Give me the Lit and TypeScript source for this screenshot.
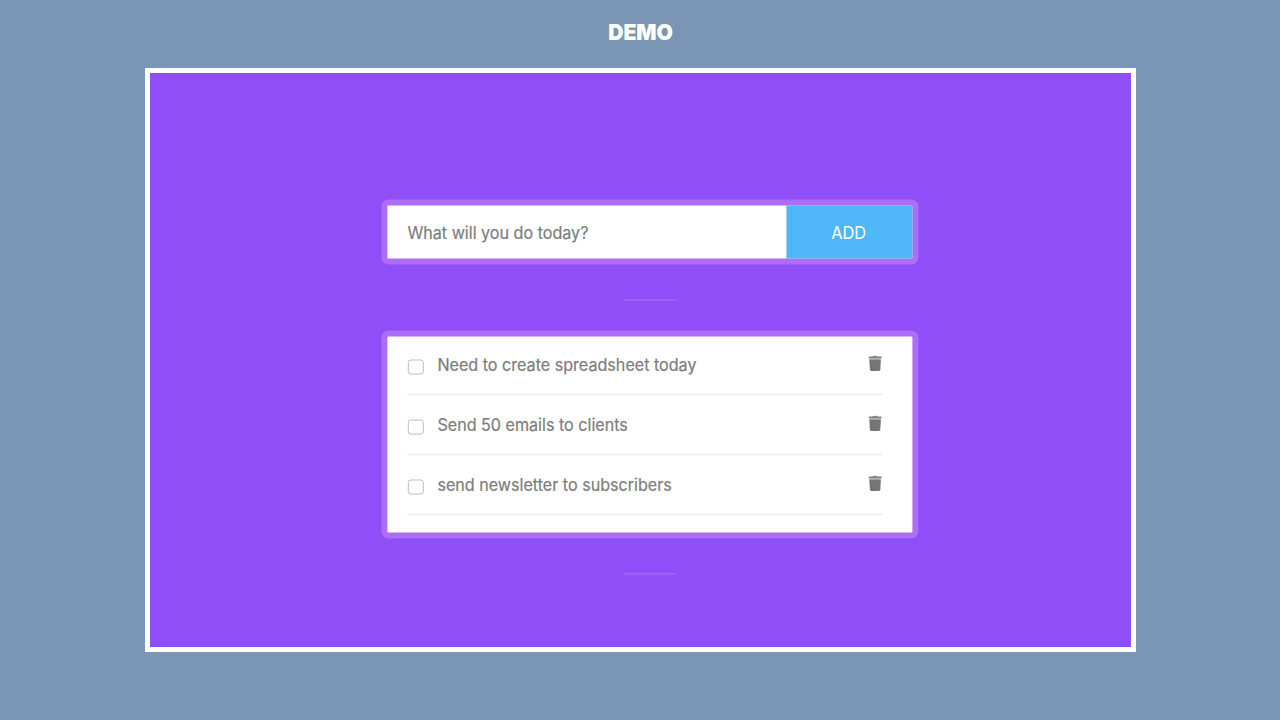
import { LitElement, html, css } from "lit";
import { customElement } from "lit/decorators.js";

@customElement("app-root")
export class AppRoot extends LitElement {
  static styles = css`
    :host { display: flex; flex-direction: column; align-items: center; box-sizing: border-box; width: 100%; height: 720px; background: #7b96b4; font-family: Inter, sans-serif; overflow: hidden; }
    h1 { margin: 0; height: 68px; box-sizing: border-box; font: 900 22px/65px Inter, sans-serif; letter-spacing: 0; color: #fff; transform: translateX(0.8px) scaleX(0.96); }
    .stage { box-sizing: border-box; width: 991px; height: 584px; border: 5px solid #fff; background: #8f4ef7; padding: 126.5px 0 0 231px; display: flex; flex-direction: column; align-items: flex-start; }
    .frame { box-sizing: border-box; width: 537px; border: 6.5px solid #ae6df8; border-radius: 7px; background: #fff; transform: translate(0.4px, -0.5px); }
    .entry { display: flex; height: 65.5px; font-size: 17px; line-height: 54px; }
    .field { flex: 1; padding-left: 20.5px; color: #7c7c7c; }
    .add { width: 126px; background: #4fb6f8; color: #fff; text-align: center; }
    .rule { width: 53px; height: 2px; background: #a061f7; margin: 34px 0 29.5px 242px; transform: translate(0.3px, -0.2px); }
    .list { height: 208px; padding: 0 30px 0 20.5px; }
    .item { box-sizing: border-box; height: 60px; border-bottom: 2px solid #f1f1f1; display: flex; align-items: flex-start; color: #7c7c7c; font-size: 17px; }
    .item:first-child { height: 59px; }
    .item:first-child .box { margin-top: 23px; }
    .item:first-child .name { margin-top: 16px; }
    .item:first-child .bin { margin-top: 18px; }
    .box { box-sizing: border-box; width: 15.5px; height: 15.5px; border: 1.5px solid #bcbcbc; border-radius: 3px; margin: 24px 14px 0 0; transform: translateX(0.4px); }
    .name { margin-top: 17px; line-height: 24px; flex: 1; }
    .label { display: inline-block; transform: translateY(0.4px) scaleX(0.948); transform-origin: 0 50%; white-space: nowrap; -webkit-text-stroke: 0.2px currentColor; }
    .entry .label { transform: scaleX(0.948); }
    .add .label { transform: scaleX(0.96); transform-origin: 50% 50%; -webkit-text-stroke: 0; }
    .bin { width: 14px; height: 17px; margin-top: 19px; display: block; }
  `;
  items = ["Need to create spreadsheet today", "Send 50 emails to clients", "send newsletter to subscribers"];
  render() {
    return html`
      <h1>DEMO</h1>
      <main class="stage">
        <div class="frame entry"><div class="field"><span class="label">What will you do today?</span></div><div class="add"><span class="label">ADD</span></div></div>
        <div class="rule"></div>
        <div class="frame list">
          ${this.items.map((t) => html`<div class="item"><span class="box"></span><span class="name"><span class="label">${t}</span></span>
            <svg class="bin" viewBox="0.3 -0.5 14 17"><path fill="#858585" d="M4.2 1.6Q4.6 .7 7 .7T9.8 1.6H13.5V3.1H.5V1.6Z"/><path fill="#b0b0b0" d="M1 3.1h12v1.5H1z"/><path fill="#757575" d="M1.2 4.4h11.6l-.6 10.1q-.1 1.4-1.4 1.4H3.2q-1.3 0-1.4-1.4Z"/></svg></div>`)}
        </div>
        <div class="rule"></div>
      </main>`;
  }
}
